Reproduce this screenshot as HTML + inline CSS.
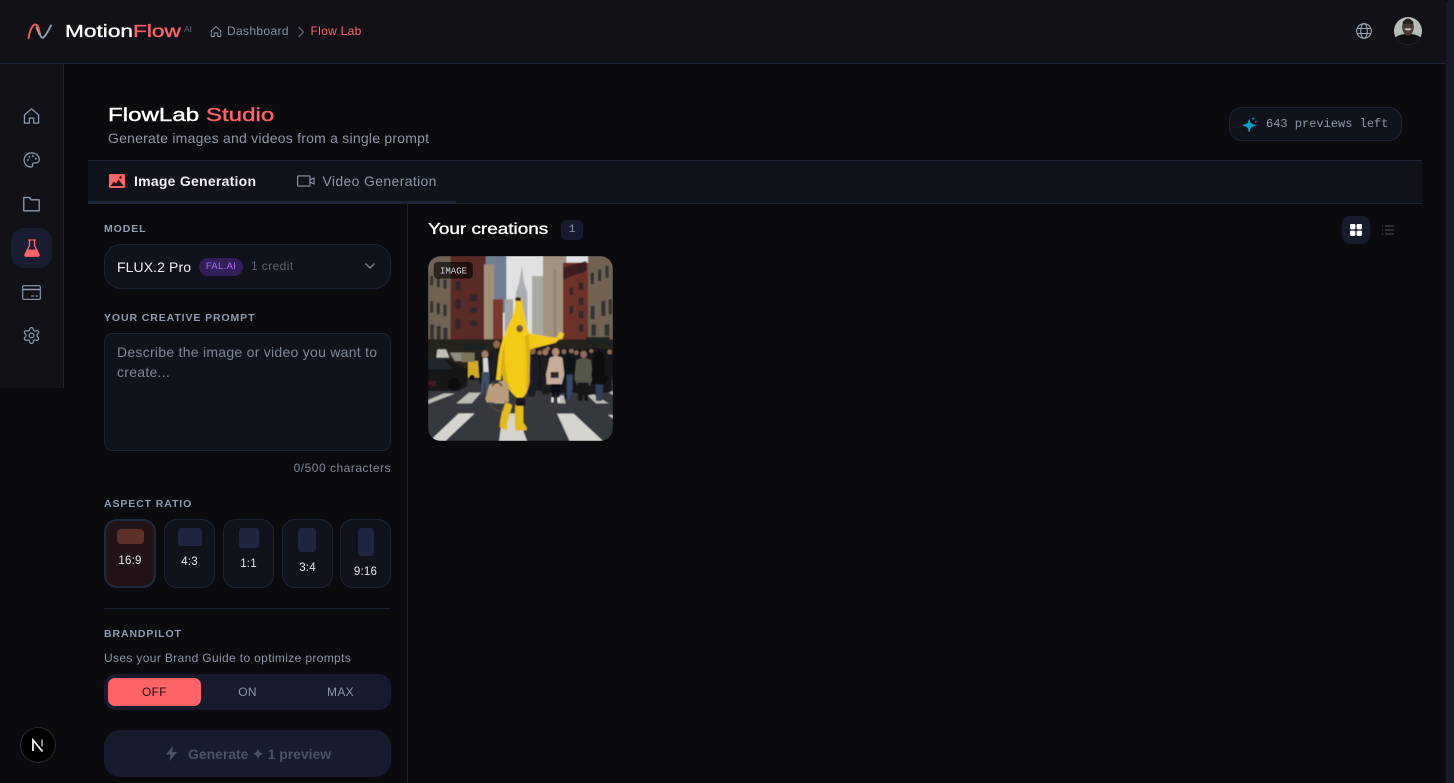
<!DOCTYPE html>
<html><head><meta charset="utf-8"><style>
*{box-sizing:border-box;margin:0;padding:0}
html,body{width:1454px;height:783px;overflow:hidden;background:#0a0a0f;font-family:"Liberation Sans",sans-serif;position:relative}
.a{position:absolute;white-space:nowrap}
.lbl{font-size:10.5px;font-weight:700;letter-spacing:.9px;color:#8f9bb0;line-height:14px}
.wide{display:inline-block;transform-origin:0 50%;font-weight:400;-webkit-text-stroke:.35px currentColor}
.ar{position:absolute;top:519px;height:69px;background:#11131c;border:1px solid #1c2435;border-radius:13px}
.ar i{position:absolute;background:#20263f;border-radius:3px}
.ar span{position:absolute;left:0;right:0;text-align:center;font-size:11.5px;letter-spacing:.2px;color:#e4e6ea;line-height:14px}
svg{position:absolute;display:block}
</style></head><body>
<div class="a" style="left:0;top:0;width:1447px;height:64px;background:#111117;border-bottom:1px solid #1c2435"></div>
<div class="a" style="left:0;top:64px;width:64px;height:324px;background:#111117;border-right:1px solid #1c2435"></div>
<div class="a" style="left:1446px;top:0;width:8px;height:783px;background:#181a2b;border-radius:4px 0 0 0"></div>

<svg style="left:27px;top:22px" width="26" height="19" viewBox="0 0 26 19" fill="none"><path d="M1.500 16C3 7 6 2.500 8.500 2.500C11 2.500 12 8 13 12" stroke="#ee5a5a" stroke-width="2" stroke-linecap="round"/><path d="M13 12C14 16 15.500 16.500 17 15C19.500 12.500 21 9 24 3.500" stroke="#8d99a8" stroke-width="2" stroke-linecap="round"/><path d="M9 5C10.500 7 11.500 11 12.500 13" stroke="#c9a08f" stroke-width="1.600"/></svg>
<div class="a wide" style="left:65px;top:20px;font-size:17.500px;line-height:23px;color:#fff;transform:scaleX(1.295)">Motion<span style="color:#ff6366">Flow</span></div>
<div class="a" style="left:184px;top:24px;font-size:8.500px;line-height:10px;color:#5a6170">AI</div>
<svg style="left:210px;top:25px" width="12" height="13" viewBox="0 0 24 24" fill="none" stroke="#8d98aa" stroke-width="1.800" stroke-linejoin="round"><path d="M2.500 10.500L12 2.500l9.500 8V22h-6v-7h-7v7h-6z"/></svg>
<div class="a" style="left:227px;top:24px;font-size:12px;line-height:15px;color:#87909f;letter-spacing:.35px">Dashboard</div>
<svg style="left:296px;top:26px" width="10" height="12" viewBox="0 0 10 12" fill="none" stroke="#66707f" stroke-width="1.100"><path d="M2.500 1l5 5-5 5"/></svg>
<div class="a" style="left:310.500px;top:24px;font-size:12px;line-height:15px;color:#ff6366;letter-spacing:.3px">Flow Lab</div>
<svg style="left:1356px;top:23px" width="16" height="16" viewBox="0 0 16 16" fill="none" stroke="#9aa6b8" stroke-width="1.100"><circle cx="8" cy="8" r="7.300"/><ellipse cx="8" cy="8" rx="3.300" ry="7.300"/><path d="M1.300 5.500h13.400M1.300 10.500h13.400"/></svg>
<svg style="left:1394px;top:17px" width="28" height="28" viewBox="0 0 28 28"><defs><clipPath id="av"><circle cx="14" cy="14" r="14"/></clipPath><linearGradient id="ag" x1="0" y1="0" x2="0" y2="1"><stop offset="0" stop-color="#0e0e11"/><stop offset="1" stop-color="#111117"/></linearGradient></defs><g clip-path="url(#av)"><rect width="28" height="28" fill="#b9bdb8"/><path d="M0 28v-6c3-4 8-5 14-5s11 1 14 5v6z" fill="url(#ag)"/><ellipse cx="14" cy="10" rx="5.800" ry="8.500" fill="#4a3b34"/><path d="M8.500 6c1-5 10-5 11 0l-1 1H9.500z" fill="#26211f"/><path d="M10.500 11.500h7c-.5 2.500-6.500 2.500-7 0z" fill="#d8d4cc"/></g></svg>

<svg style="left:23px;top:107px" width="17" height="18" viewBox="0 0 24 24" fill="none" stroke="#8d9ab0" stroke-width="1.800" stroke-linejoin="round"><path d="M2 10.500L12 2l10 8.500V22h-7v-7H9v7H2z"/></svg>
<svg style="left:23px;top:151px" width="17" height="18" viewBox="0 0 24 24" fill="none" stroke="#8d9ab0" stroke-width="1.800"><path d="M12 2C6.500 2 1.500 6.500 1.500 12S6 22 11 22c2 0 3-1.200 2.500-3-.5-1.600.5-3 2.500-3h3c2.500 0 4-2 4-4.500C23 6 18 2 12 2z"/><g fill="#8d9ab0" stroke="none"><circle cx="7" cy="12" r="1.400"/><circle cx="9" cy="7.500" r="1.400"/><circle cx="14" cy="6.500" r="1.400"/><circle cx="18" cy="10" r="1.400"/></g></svg>
<svg style="left:23px;top:196px" width="17" height="16" viewBox="0 0 17 16" fill="none" stroke="#8d9ab0" stroke-width="1.300" stroke-linejoin="round"><path d="M.8 1.500h5.500L8 3.800h8.200v11H.8z"/></svg>
<div class="a" style="left:11px;top:228px;width:41px;height:40px;background:#1a1d31;border-radius:13px"></div>
<svg style="left:24px;top:239px" width="16" height="18" viewBox="0 0 16 18" fill="none"><path d="M4 1h8" stroke="#ff6366" stroke-width="1.300"/><path d="M5.500 1v5.500L1 15.500c-.4 1 .2 1.700 1 1.700h12c.8 0 1.400-.7 1-1.700L10.500 6.500V1" stroke="#ff6366" stroke-width="1.300"/><path d="M3.500 10.500h9l2.500 5.700-.8 1H1.800l-.8-1z" fill="#ff6366"/></svg>
<svg style="left:22px;top:285px" width="19" height="15" viewBox="0 0 19 15" fill="none" stroke="#8d9ab0" stroke-width="1.100"><rect x=".7" y=".7" width="17.600" height="13.600" rx="1.200"/><path d="M.7 4.500h17.600" stroke-width="1.600"/><path d="M9 11h3M13.500 11h2.500" stroke-width="1"/></svg>
<svg style="left:22px;top:326px" width="19" height="19" viewBox="0 0 24 24" fill="none" stroke="#8d9ab0" stroke-width="1.500" stroke-linejoin="round"><path d="M12.220 2h-.44a2 2 0 0 0-2 2v.18a2 2 0 0 1-1 1.730l-.43.25a2 2 0 0 1-2 0l-.15-.08a2 2 0 0 0-2.730.73l-.22.38a2 2 0 0 0 .73 2.730l.15.1a2 2 0 0 1 1 1.720v.51a2 2 0 0 1-1 1.740l-.15.09a2 2 0 0 0-.73 2.730l.22.38a2 2 0 0 0 2.730.73l.15-.08a2 2 0 0 1 2 0l.43.25a2 2 0 0 1 1 1.730V20a2 2 0 0 0 2 2h.44a2 2 0 0 0 2-2v-.18a2 2 0 0 1 1-1.730l.43-.25a2 2 0 0 1 2 0l.15.08a2 2 0 0 0 2.730-.73l.22-.39a2 2 0 0 0-.73-2.730l-.15-.08a2 2 0 0 1-1-1.740v-.5a2 2 0 0 1 1-1.740l.15-.09a2 2 0 0 0 .73-2.730l-.22-.38a2 2 0 0 0-2.730-.73l-.15.08a2 2 0 0 1-2 0l-.43-.25a2 2 0 0 1-1-1.730V4a2 2 0 0 0-2-2z"/><circle cx="12" cy="12" r="3"/></svg>
<div class="a" style="left:20px;top:727px;width:36px;height:36px;background:#000;border:1px solid #2b2b2f;border-radius:50%;color:#fff"></div>
<svg style="left:31px;top:738px" width="14" height="14" viewBox="0 0 14 14" fill="none"><path d="M2 13V2l9.500 11.500" stroke="#fff" stroke-width="1.700"/><path d="M11 1.500v7" stroke="#bbb" stroke-width="1.500"/></svg>

<div class="a wide" style="left:108px;top:103px;font-size:18px;line-height:24px;color:#fff;transform:scaleX(1.34);-webkit-text-stroke:.4px currentColor">FlowLab <span style="color:#ff6366">Studio</span></div>
<div class="a" style="left:108px;top:130px;font-size:14px;line-height:17px;color:#8c96a7;letter-spacing:.23px">Generate images and videos from a single prompt</div>
<div class="a" style="left:1229px;top:107px;width:173px;height:34px;background:#11131c;border:1px solid #1c2435;border-radius:13px"></div>
<svg style="left:1243px;top:117px" width="15" height="15" viewBox="0 0 17 17" fill="#06a6cc"><path d="M7 3C7.500 7 8.500 8.500 14 9.500 8.500 10.500 7.500 12 7 17 6.500 12 5.500 10.500 0 9.500 5.500 8.500 6.500 7 7 3z" stroke="#06a6cc" stroke-width="1.200"/><path d="M11.500 0l.6 1.500 1.400.5-1.400.5-.6 1.500-.6-1.500-1.400-.5 1.400-.5zM14.500 4l.4 1 1 .4-1 .4-.4 1-.4-1-1-.4 1-.4z"/></svg>
<div class="a" style="left:1266px;top:117px;font-family:'Liberation Mono',monospace;font-size:12px;line-height:14px;color:#8c96a7">643 previews left</div>

<div class="a" style="left:88px;top:160px;width:1334px;height:44px;background:#11131c;border-top:1px solid #1c2435;border-bottom:1px solid #1c2435"></div>
<div class="a" style="left:88px;top:201px;width:368px;height:2px;background:#1c2537"></div>
<svg style="left:109px;top:174px" width="16" height="14" viewBox="0 0 16 14"><rect width="16" height="14" rx="1.500" fill="#ff6366"/><path d="M1.500 12l3.500-4.500 2 2 2.500-4 5 6.500z" fill="#251416"/><circle cx="11.500" cy="3.500" r="1.200" fill="#251416"/></svg>
<div class="a" style="left:134px;top:173px;font-size:14px;font-weight:700;line-height:17px;color:#eef0f3;letter-spacing:.25px">Image Generation</div>
<svg style="left:297px;top:175px" width="18" height="12" viewBox="0 0 18 12" fill="none" stroke="#8c96a7" stroke-width="1.100"><rect x=".6" y=".9" width="12.400" height="10.200" rx="1"/><path d="M13 5l4-2v6l-4-2z"/></svg>
<div class="a" style="left:322.500px;top:173px;font-size:14px;line-height:17px;color:#8c96a7;letter-spacing:.35px">Video Generation</div>
<div class="a" style="left:407px;top:204px;width:1px;height:579px;background:#1c2435"></div>

<div class="a lbl" style="left:104px;top:222px">MODEL</div>
<div class="a" style="left:104px;top:244px;width:287px;height:45px;background:#11131c;border:1px solid #1c2435;border-radius:17px"></div>
<div class="a" style="left:117px;top:259px;font-size:14px;line-height:17px;color:#eef0f3;letter-spacing:.1px">FLUX.2 Pro</div>
<div class="a" style="left:199px;top:258px;width:44px;height:18px;background:#321e5b;border-radius:9px;color:#a874ea;font-size:9.500px;line-height:18px;text-align:center;letter-spacing:.3px">FAL.AI</div>
<div class="a" style="left:251px;top:259px;font-size:12px;line-height:15px;color:#5f6672;letter-spacing:.4px">1 credit</div>
<svg style="left:364px;top:262px" width="12" height="8" viewBox="0 0 12 8" fill="none" stroke="#737985" stroke-width="1.500"><path d="M1.500 1.500L6 6l4.500-4.500"/></svg>

<div class="a lbl" style="left:104px;top:311px">YOUR CREATIVE PROMPT</div>
<div class="a" style="left:104px;top:333px;width:287px;height:118px;background:#11131c;border:1px solid #1c2435;border-radius:9px"></div>
<div class="a" style="left:117px;top:342px;font-size:14px;line-height:20px;color:#7e8797;letter-spacing:.27px">Describe the image or video you want to<br>create...</div>
<div class="a" style="right:1063px;top:461px;font-size:12px;line-height:14px;color:#7e8797;letter-spacing:.5px">0/500 characters</div>

<div class="a lbl" style="left:104px;top:497px">ASPECT RATIO</div>
<div class="ar" style="left:104px;width:52px;background:#221416;border:2px solid #1f2a3e"><i style="left:11px;top:8px;width:27px;height:15px;background:#5e3028;border-radius:4px"></i><span style="top:33px">16:9</span></div>
<div class="ar" style="left:164px;width:51px"><i style="left:13px;top:8px;width:24px;height:18px"></i><span style="top:35px">4:3</span></div>
<div class="ar" style="left:223px;width:51px"><i style="left:15px;top:8px;width:20px;height:20px"></i><span style="top:37px">1:1</span></div>
<div class="ar" style="left:282px;width:51px"><i style="left:15px;top:8px;width:18px;height:24px"></i><span style="top:41px">3:4</span></div>
<div class="ar" style="left:340px;width:51px"><i style="left:17px;top:8px;width:16px;height:28px"></i><span style="top:45px">9:16</span></div>

<div class="a" style="left:104px;top:608px;width:287px;height:1px;background:#1c2435"></div>
<div class="a lbl" style="left:104px;top:627px">BRANDPILOT</div>
<div class="a" style="left:104px;top:651px;font-size:12px;line-height:14px;color:#8c96a7;letter-spacing:.35px">Uses your Brand Guide to optimize prompts</div>
<div class="a" style="left:104px;top:674px;width:287px;height:36px;background:#181b2e;border-radius:12px"></div>
<div class="a" style="left:108px;top:678px;width:93px;height:28px;background:#ff6366;border-radius:7px;color:#1b1013;font-size:12px;line-height:28px;text-align:center;letter-spacing:.3px">OFF</div>
<div class="a" style="left:201px;top:678px;width:93px;font-size:12px;line-height:28px;text-align:center;color:#8c96a7;letter-spacing:.3px">ON</div>
<div class="a" style="left:294px;top:678px;width:93px;font-size:12px;line-height:28px;text-align:center;color:#8c96a7;letter-spacing:.3px">MAX</div>

<div class="a" style="left:104px;top:730px;width:287px;height:47px;background:#181b2e;border-radius:16px"></div>
<svg style="left:165px;top:746px" width="13" height="15" viewBox="0 0 13 15" fill="#4c5364"><path d="M8 0L1 8.500h4.500L4.500 15 12 6H7z"/></svg>
<div class="a" style="left:188px;top:746px;font-size:14px;font-weight:700;line-height:17px;color:#4c5364;letter-spacing:-.05px">Generate <span style="font-size:14px">✦</span> 1 preview</div>

<div class="a wide" style="left:428px;top:220px;font-size:15.500px;line-height:20px;color:#fff;transform:scaleX(1.22)">Your creations</div>
<div class="a" style="left:561px;top:220px;width:22px;height:20px;background:#181b2e;border-radius:5px;color:#8c96a7;font-family:'Liberation Mono',monospace;font-size:11px;line-height:20px;text-align:center">1</div>
<div class="a" style="left:1342px;top:216px;width:28px;height:28px;background:#181b2e;border-radius:8px"></div>
<svg style="left:1350px;top:224px" width="12" height="12" viewBox="0 0 12 12" fill="#fff"><rect width="5.400" height="5.400" rx="1.200"/><rect x="6.600" width="5.400" height="5.400" rx="1.200"/><rect y="6.600" width="5.400" height="5.400" rx="1.200"/><rect x="6.600" y="6.600" width="5.400" height="5.400" rx="1.200"/></svg>
<svg style="left:1382px;top:225px" width="12" height="10" viewBox="0 0 12 10" fill="none" stroke="#4a505d" stroke-width="1"><path d="M3 1h9M3 5h9M3 9h9M0 1h1M0 5h1M0 9h1"/></svg>

<svg style="left:428px;top:256px;border-radius:13px" width="185" height="185" viewBox="0 0 555 555">
<defs><filter id="bl" x="0" y="0" width="100%" height="100%"><feGaussianBlur stdDeviation="1.500"/></filter></defs>
<g filter="url(#bl)">
<rect width="555" height="555" fill="#dfe1e2"/>
<rect x="170" y="0" width="65" height="170" fill="#6f7f8e"/>
<path d="M282 30l6 50 10 30v130l-34 0V110l10-30z" fill="#a8aeb4"/>
<rect x="230" y="130" width="25" height="130" fill="#a3a6a6"/>
<rect x="312" y="60" width="36" height="200" fill="#aaaaa4"/>
<rect x="345" y="0" width="70" height="280" fill="#a09380"/>
<rect x="405" y="20" width="75" height="270" fill="#6c3229"/>
<path d="M405 35l70-20v30l-70 25z" fill="#3f1f1c"/>
<rect x="480" y="0" width="75" height="290" fill="#6f6353"/>
<rect x="0" y="0" width="70" height="290" fill="#6f6353"/>
<rect x="68" y="0" width="105" height="290" fill="#5a2c26"/>
<rect x="168" y="25" width="30" height="250" fill="#a08f76"/>
<rect x="195" y="130" width="30" height="130" fill="#7a372d"/>
<g fill="#26262a" opacity=".8">
<rect x="6" y="60" width="10" height="28"/><rect x="26" y="65" width="10" height="28"/><rect x="46" y="70" width="10" height="28"/>
<rect x="6" y="135" width="10" height="35"/><rect x="26" y="140" width="10" height="35"/><rect x="46" y="145" width="10" height="35"/>
<rect x="6" y="205" width="12" height="50"/><rect x="26" y="210" width="12" height="50"/><rect x="46" y="215" width="12" height="45"/>
<rect x="82" y="75" width="16" height="28"/><rect x="82" y="130" width="16" height="28"/><rect x="82" y="190" width="16" height="28"/><rect x="125" y="115" width="22" height="20"/><rect x="125" y="155" width="22" height="15"/><rect x="125" y="195" width="22" height="15"/>
<rect x="452" y="30" width="14" height="22"/><rect x="452" y="80" width="14" height="22"/><rect x="452" y="125" width="14" height="22"/><rect x="452" y="165" width="14" height="22"/><rect x="452" y="205" width="14" height="22"/><rect x="425" y="95" width="10" height="22"/><rect x="425" y="150" width="10" height="22"/>
<rect x="488" y="50" width="10" height="35"/><rect x="510" y="40" width="10" height="35"/><rect x="532" y="30" width="10" height="35"/><rect x="488" y="150" width="12" height="40"/><rect x="520" y="135" width="12" height="45"/><rect x="542" y="130" width="10" height="45"/><rect x="490" y="205" width="14" height="35"/><rect x="530" y="205" width="14" height="35"/>
<rect x="378" y="40" width="6" height="200" fill="#8a7d6b"/>
</g>
<rect y="250" width="555" height="125" fill="#26211f"/>
<rect x="110" y="262" width="60" height="20" fill="#1d2024"/><rect x="475" y="243" width="70" height="24" fill="#1d2024"/>
<rect y="372" width="555" height="183" fill="#35373d"/>
<g fill="#bdbcb6">
<path d="M0 432l48-20 32 1-80 31z"/><path d="M85 442l38-32h36l-28 32z"/><path d="M195 442l20-8h18l-3 8z"/><path d="M385 418h22l6 24h-24z"/><path d="M475 415h22l45 27h-38z"/><path d="M535 405h20v12z"/>
</g>
<g fill="#d4d3cd"><path d="M5 555L92 472h48L52 555z"/><path d="M213 555l12-83h42l30 83z"/><path d="M425 555L387 473h50l88 82z"/><path d="M540 477h15v10z"/></g>
<path d="M0 308h50l40 18 28 14v50l-25 15H0z" fill="#131519"/><path d="M0 306h48l25 34H0z" fill="#24282d"/>
<circle cx="78" cy="385" r="19" fill="#0b0c0e"/><rect x="0" y="375" width="25" height="15" fill="#3a1f20"/>
<path d="M65 290h45l20 25H80z" fill="#8f8d7c"/>
<path d="M120 315h30l10 25v25h-40z" fill="#d6ac1f"/><circle cx="132" cy="364" r="8" fill="#111"/><rect x="100" y="290" width="40" height="28" fill="#7c7558"/>
<path d="M28 280h26l10 25H25z" fill="#bfbfba"/>
<path d="M295 285l25-8 20 6 30-8 30 8 30-8 30 6 35-8 55 10v125l-40 5-30 5-50-10-50 5-50-10-40 5z" fill="#17161a"/>
<g fill="#8c6a56"><circle cx="335" cy="290" r="7"/><circle cx="408" cy="287" r="7"/><circle cx="430" cy="285" r="7"/><circle cx="445" cy="290" r="7"/><circle cx="490" cy="285" r="6"/><circle cx="545" cy="288" r="7"/><circle cx="360" cy="278" r="6"/></g>
<ellipse cx="171" cy="295" rx="10" ry="12" fill="#a37a62"/><path d="M150 318l10-13h22l10 15-5 65h-32z" fill="#171719"/><path d="M165 306h14l3 42h-16z" fill="#d5d6d8"/><path d="M162 348h24l-5 65h-8l-3-40-5 40h-6z" fill="#3e5169"/>
<ellipse cx="206" cy="265" rx="10" ry="12" fill="#8c6751"/><path d="M182 295l14-16h20l8 16-5 80h-34z" fill="#1c1e24"/>
<ellipse cx="314" cy="285" rx="9" ry="10" fill="#8a6650"/><path d="M300 302h30l5 50-10 45-5 25h-20z" fill="#1b1b20"/>
<ellipse cx="352" cy="288" rx="9" ry="10" fill="#9a725c"/><path d="M338 305h30v80l-5 30h-20l-3-30z" fill="#1d1a1d"/>
<ellipse cx="383" cy="288" rx="11" ry="12" fill="#b58b75"/><path d="M365 305l18-6 20 6 6 50-8 30h-45l-2-30z" fill="#c4ad98"/><path d="M370 384h28l-5 55h-7l-3-40-3 40h-7z" fill="#111114"/><path d="M368 348h24v18h-24z" fill="#29272a"/><rect x="370" y="424" width="7" height="15" fill="#e4e4e4"/><rect x="388" y="424" width="7" height="15" fill="#e4e4e4"/>
<path d="M410 305h28l-2 95h-12l-6 30h-8z" fill="#111317"/><path d="M416 355h18v45l-10 30h-8z" fill="#354a62"/>
<ellipse cx="467" cy="295" rx="10" ry="11" fill="#8f6a58"/><path d="M445 312l22-8 22 8 6 55-10 22h-36l-10-20z" fill="#55544a"/><path d="M448 380h34l-2 55h-10l-3-30-4 30h-12z" fill="#141416"/>
<path d="M500 290q15-12 28 5l12 70-10 20h-36l-4-30z" fill="#0d0e11"/><path d="M502 385h24l-4 50h-18z" fill="#2d3f55"/><path d="M530 300h25v60h-25z" fill="#17181c"/>
<path d="M240 440q-10-3 -16 18l-8 40-1 15q8 8 24 8l-2-18 10-35 6-20z" fill="#e3bb18"/>
<path d="M262 445h24v55l10 14v9h-34l-2-25z" fill="#e3bb18"/>
<path d="M266 125L280 123 282 136Q290 190 303 232L384 246 396 226 409 234 402 248 390 252 384 260 306 280 304 380Q298 420 276 430 252 420 228 374L222 352 218 372H204L212 300Q220 250 245 200 262 170 263 135Z" fill="#f3cb14"/>
<path d="M232 260Q226 320 240 380L252 405 226 375 222 350 216 368 222 290z" fill="#d9b012"/>
<path d="M290 240Q298 300 294 410 300 400 304 375L306 280 303 235Z" fill="#dfb510"/>
<ellipse cx="275" cy="218" rx="10" ry="11" fill="#7a5640"/>
<rect x="262" y="124" width="17" height="11" rx="2" fill="#2d2a22"/>
<rect x="264" y="425" width="28" height="25" rx="4" fill="#16171a"/>
<path d="M172 428l12-42 44-14 13 16 2 48-10 4h-56z" fill="#b99c7b"/><path d="M192 390q16-20 30 0" fill="none" stroke="#3d2f22" stroke-width="4"/><path d="M183 436q10 30 40 30l10-30" fill="none" stroke="#6e5a45" stroke-width="2"/>
</g>
<rect x="17" y="18" width="118" height="50" rx="12" fill="#000" fill-opacity=".62"/>
<text x="36" y="53" font-family="'Liberation Mono',monospace" font-size="27" fill="#d8dade">IMAGE</text>
</svg>
</body></html>
